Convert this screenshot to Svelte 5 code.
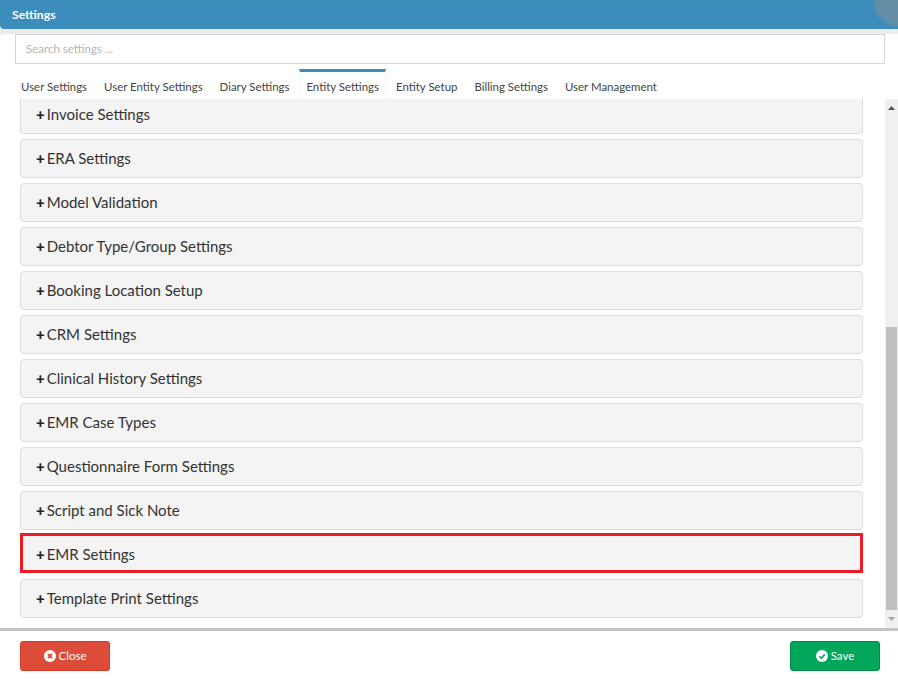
<script>
  const tabs = ['User Settings','User Entity Settings','Diary Settings','Entity Settings','Entity Setup','Billing Settings','User Management'];
  const panels = ['Invoice Settings','ERA Settings','Model Validation','Debtor Type/Group Settings','Booking Location Setup','CRM Settings','Clinical History Settings','EMR Case Types','Questionnaire Form Settings','Script and Sick Note','EMR Settings','Template Print Settings'];
</script>

<div class="modal">
  <header class="head">
    <h1>Settings</h1>
    <span class="ripple"></span>
  </header>
  <div class="top">
    <div class="inner">
      <input class="search" placeholder="Search settings ..." />
      <nav class="tabs">
        {#each tabs as t}
          <button class="tab" class:active={t === 'Entity Settings'}>{t}</button>
        {/each}
      </nav>
    </div>
  </div>
  <div class="body">
    <div class="list">
      {#each panels as p}
        <div class="panel" class:hl={p === 'EMR Settings'}><b>+</b>{p}</div>
      {/each}
    </div>
    <div class="bar">
      <svg class="arrow" width="7" height="4" viewBox="0 0 7 4"><path d="M3.5 0L7 4H0z" fill="#505050"/></svg>
      <div class="track"><div class="thumb"></div></div>
      <svg class="arrow" width="7" height="4" viewBox="0 0 7 4"><path d="M0 0h7L3.5 4z" fill="#a3a3a3"/></svg>
    </div>
  </div>
  <footer class="foot">
    <button class="btn close">
      <svg width="12" height="12" viewBox="0 0 12 12"><circle cx="6" cy="6" r="6" fill="#fff"/><path d="M4 4l4 4M8 4l-4 4" stroke="#dd4b39" stroke-width="1.8"/></svg>
      <span>Close</span>
    </button>
    <button class="btn save">
      <svg width="12" height="12" viewBox="0 0 12 12"><circle cx="6" cy="6" r="6" fill="#fff"/><path d="M3.2 6.2l2 2 3.6-3.8" fill="none" stroke="#00a65a" stroke-width="1.6"/></svg>
      <span>Save</span>
    </button>
  </footer>
</div>

<style>
  :global(body) { margin: 0; background: #fff; }
  .modal { width: 898px; height: 680px; display: flex; flex-direction: column; font-family: Lato, "Noto Sans", sans-serif; color: #333; overflow: hidden; }
  .head { height: 29px; flex: none; background: #3c8dbc; border-bottom-left-radius: 4px; display: flex; align-items: center; justify-content: space-between; padding-left: 12px; position: relative; overflow: hidden; }
  h1 { margin: 0; font-size: 12.2px; font-weight: 700; color: #fff; }
  .ripple { position: absolute; left: 874px; top: -22px; width: 48px; height: 48px; border-radius: 50%; background: #648ea6; filter: blur(1.5px); }
  .top { flex: none; background: #ececec; padding-top: 5px; height: 70px; box-sizing: border-box; }
  .inner { background: #fff; height: 65px; border-top-left-radius: 4px; }
  .search { display: block; box-sizing: border-box; margin-left: 15px; width: 870px; height: 30px; border: 1px solid #d2d6de; padding: 0 10px 2px; font: 11.5px Lato, sans-serif; outline: none; background: #fff; }
  .search::placeholder { color: #b5b5b5; opacity: 1; }
  .tabs { display: flex; padding-left: 14px; margin-top: 5px; gap: 3px; }
  .tab { border: 0; border-top: 3px solid transparent; background: #fff; font: 11.45px Lato, sans-serif; color: #444; height: 31px; padding: 1px 7px 0; white-space: nowrap; }
  .tab.active { border-top-color: #3c8dbc; border-left: 1px solid #f4f4f4; border-right: 1px solid #f4f4f4; padding: 1px 6px 0; }
  .body { flex: 1; min-height: 0; display: flex; }
  .list { flex: 1; padding: 0 22px 0 20px; overflow: hidden; display: flex; flex-direction: column; gap: 5px; }
  .panel { flex: none; box-sizing: border-box; height: 39px; background: #f4f4f4; border: 1px solid #ddd; border-radius: 4px; padding: 0 0 1px 15px; display: flex; align-items: center; font-size: 15px; color: #333; }
  .panel:first-child { height: 35px; border-top: 0; border-radius: 0 0 4px 4px; padding-bottom: 4px; }
  .panel b { font-size: 15px; margin-right: 2px; font-weight: 900; color: #222; }
  .panel.hl { border: 3px solid #ed1c24; padding: 1px 0 0 13px; border-radius: 0; height: 40px; margin: -2px 0 1px; }
  .bar { width: 13px; flex: none; background: #f0f0f0; display: flex; flex-direction: column; align-items: center; }
  .arrow { flex: none; margin: 7px 0; }
  .track { flex: 1; width: 11px; display: flex; flex-direction: column; justify-content: flex-end; }
  .thumb { height: 283px; background: #c0c0c0; }
  .foot { flex: none; height: 52px; border-top: 3px solid #c4c4c4; box-sizing: border-box; display: flex; justify-content: space-between; align-items: flex-start; padding: 10px 18px 0 20px; }
  .btn { width: 90px; height: 30px; border-radius: 3px; font: 11.5px Lato, sans-serif; color: #fff; display: flex; align-items: center; justify-content: center; gap: 3px; }
  .btn span { position: relative; top: -1px; }
  .close { background: #dd4b39; border: 1px solid #d73925; }
  .save { background: #00a65a; border: 1px solid #008d4c; }
</style>
